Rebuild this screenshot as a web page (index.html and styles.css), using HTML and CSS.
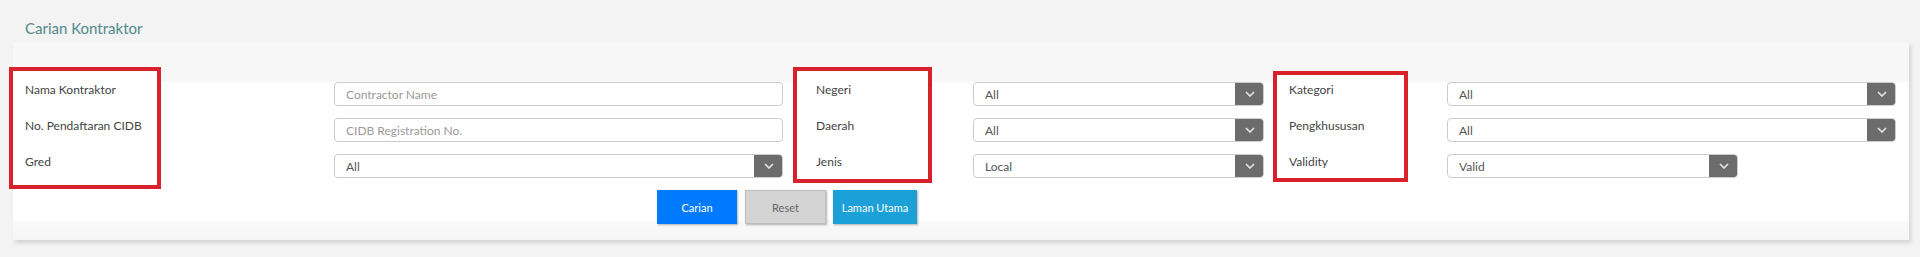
FILE: index.html
```html
<!DOCTYPE html>
<html lang="ms">
<head>
<meta charset="utf-8">
<title>Carian Kontraktor</title>
<link rel="stylesheet" href="styles.css">
</head>
<body>
<h1 class="page-title">Carian Kontraktor</h1>
<section class="card">
  <div class="anno anno-1"></div>
  <div class="anno anno-2"></div>
  <div class="anno anno-3"></div>
  <div class="form-grid">
    <label class="lbl">Nama Kontraktor</label>
    <div class="cell"><input class="field w-wide" type="text" placeholder="Contractor Name"></div>
    <label class="lbl">Negeri</label>
    <div class="cell"><div class="select w-mid"><span class="select-value">All</span><span class="select-arrow"><svg width="10" height="6" viewBox="0 0 10 6"><polyline points="1,1 5,5 9,1" fill="none" stroke="#e6e6e6" stroke-width="1.6"/></svg></span></div></div>
    <label class="lbl">Kategori</label>
    <div class="cell"><div class="select w-wide"><span class="select-value">All</span><span class="select-arrow"><svg width="10" height="6" viewBox="0 0 10 6"><polyline points="1,1 5,5 9,1" fill="none" stroke="#e6e6e6" stroke-width="1.6"/></svg></span></div></div>

    <label class="lbl">No. Pendaftaran CIDB</label>
    <div class="cell"><input class="field w-wide" type="text" placeholder="CIDB Registration No."></div>
    <label class="lbl">Daerah</label>
    <div class="cell"><div class="select w-mid"><span class="select-value">All</span><span class="select-arrow"><svg width="10" height="6" viewBox="0 0 10 6"><polyline points="1,1 5,5 9,1" fill="none" stroke="#e6e6e6" stroke-width="1.6"/></svg></span></div></div>
    <label class="lbl">Pengkhususan</label>
    <div class="cell"><div class="select w-wide"><span class="select-value">All</span><span class="select-arrow"><svg width="10" height="6" viewBox="0 0 10 6"><polyline points="1,1 5,5 9,1" fill="none" stroke="#e6e6e6" stroke-width="1.6"/></svg></span></div></div>

    <label class="lbl">Gred</label>
    <div class="cell"><div class="select w-wide"><span class="select-value">All</span><span class="select-arrow"><svg width="10" height="6" viewBox="0 0 10 6"><polyline points="1,1 5,5 9,1" fill="none" stroke="#e6e6e6" stroke-width="1.6"/></svg></span></div></div>
    <label class="lbl">Jenis</label>
    <div class="cell"><div class="select w-mid"><span class="select-value">Local</span><span class="select-arrow"><svg width="10" height="6" viewBox="0 0 10 6"><polyline points="1,1 5,5 9,1" fill="none" stroke="#e6e6e6" stroke-width="1.6"/></svg></span></div></div>
    <label class="lbl">Validity</label>
    <div class="cell"><div class="select w-mid"><span class="select-value">Valid</span><span class="select-arrow"><svg width="10" height="6" viewBox="0 0 10 6"><polyline points="1,1 5,5 9,1" fill="none" stroke="#e6e6e6" stroke-width="1.6"/></svg></span></div></div>
  </div>
  <div class="actions">
    <button class="btn btn-primary" type="button">Carian</button>
    <button class="btn btn-reset" type="button">Reset</button>
    <button class="btn btn-info" type="button">Laman Utama</button>
  </div>
</section>
</body>
</html>
```
FILE: styles.css
```css
* { box-sizing: border-box; }
html, body { margin: 0; padding: 0; }
body {
  background: #f3f3f3;
  font-family: Lato, "Liberation Sans", sans-serif;
  width: 1920px;
  height: 257px;
  overflow: hidden;
}
.page-title {
  margin: 18px 0 0 25px;
  font-size: 15px;
  line-height: 20px;
  font-weight: 400;
  color: #518989;
}
.card {
  position: relative;
  margin: 4px 0 0 13px;
  width: 1896px;
  height: 198px;
  padding: 40px 12px 0 12px;
  background: linear-gradient(to bottom, #f7f7f7 0, #f7f7f7 40px, #ffffff 40px, #ffffff 178px, #f9f9f9 180px, #f5f5f5 198px);
  box-shadow: 2px 3px 4px rgba(0, 0, 0, 0.13);
}
.anno {
  position: absolute;
  border: 4px solid #d8222b;
  background: #ffffff;
}
.anno-1 { left: -4px; top: 25px; width: 152px; height: 122px; }
.anno-2 { left: 780px; top: 25px; width: 139px; height: 116px; }
.anno-3 { left: 1260px; top: 29px; width: 135px; height: 111px; }
.form-grid {
  position: relative;
  z-index: 1;
  display: grid;
  grid-template-columns: 309px 482px 157px 316px 158px 1fr;
  grid-auto-rows: 36px;
}
.lbl {
  font-size: 12px;
  line-height: 16px;
  color: #444444;
}
.cell { display: flex; align-items: flex-start; }
.w-wide { width: 449px; }
.w-mid { width: 291px; }
.field {
  height: 24px;
  border: 1px solid #cccccc;
  border-radius: 4px;
  padding: 0 11px;
  font-family: Lato, "Liberation Sans", sans-serif;
  font-size: 12px;
  color: #555555;
  background: #ffffff;
  outline: none;
}
.field::placeholder { color: #9a9a9a; }
.select {
  display: flex;
  height: 24px;
  border: 1px solid #cccccc;
  border-radius: 4px;
  background: #ffffff;
  overflow: hidden;
}
.select-value {
  flex: 1;
  padding-left: 11px;
  font-size: 12px;
  line-height: 23px;
  color: #555555;
}
.select-arrow {
  width: 29px;
  margin: -1px -1px -1px 0;
  background: #6c6c6c;
  border-radius: 0 4px 4px 0;
  display: flex;
  align-items: center;
  justify-content: center;
}
.actions {
  position: relative;
  z-index: 1;
  display: flex;
  gap: 8px;
  padding-left: 632px;
}
.btn {
  height: 34px;
  border: 0;
  font-family: Lato, "Liberation Sans", sans-serif;
  font-size: 11px;
  color: #ffffff;
  box-shadow: 1px 1px 2px rgba(0, 0, 0, 0.3);
  padding: 0;
}
.btn-primary { width: 80px; background: #007bff; }
.btn-reset {
  width: 81px;
  background: #d4d4d4;
  border: 1px solid #bdbdbd;
  color: #666666;
}
.btn-info { width: 84px; margin-left: -1px; background: #1ba0d7; }
```
